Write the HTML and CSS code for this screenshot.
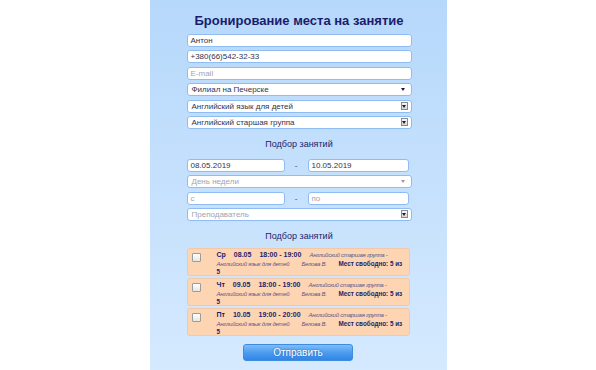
FILE: index.html
```html
<!DOCTYPE html>
<html lang="ru">
<head>
  <meta charset="UTF-8" />
  <meta name="viewport" content="width=device-width, initial-scale=1" />
  <title>Бронирование места на занятие</title>
  <link rel="stylesheet" href="styles.css">
</head>
<body>
  <div class="panel">
    <h1>Бронирование места на занятие</h1>
    <div class="fields">
      <div class="field">Антон</div>
      <div class="field">+380(66)542-32-33</div>
      <div class="field placeholder">E-mail</div>
      <div class="field select">Филиал на Печерске<span class="tri"></span></div>
      <div class="field select">Английский язык для детей<span class="btn-arrow"><span class="tri"></span></span></div>
      <div class="field select">Английский старшая группа<span class="btn-arrow"><span class="tri"></span></span></div>
    </div>

    <h2>Подбор занятий</h2>
    <div class="fields">
      <div class="range">
        <div class="field half">08.05.2019</div>
        <span class="dash">-</span>
        <div class="field half right">10.05.2019</div>
      </div>
      <div class="field select placeholder">День недели<span class="tri light"></span></div>
      <div class="range">
        <div class="field half placeholder">с</div>
        <span class="dash">-</span>
        <div class="field half right placeholder">по</div>
      </div>
      <div class="field select placeholder">Преподаватель<span class="btn-arrow"><span class="tri"></span></span></div>
    </div>

    <h2 class="second">Подбор занятий</h2>
    <div class="lessons">
      <div class="lesson">
        <span class="check"></span>
        <p><b>Ср</b><b class="sp">08.05</b><b class="sp">18:00 - 19:00</b><i class="sp">Английский старшая группа - Английский язык для детей</i><i class="sp wide">Белова В.</i><b class="sp wide free">Мест свободно: 5 из 5</b></p>
      </div>
      <div class="lesson">
        <span class="check"></span>
        <p><b>Чт</b><b class="sp">09.05</b><b class="sp">18:00 - 19:00</b><i class="sp">Английский старшая группа - Английский язык для детей</i><i class="sp wide">Белова В.</i><b class="sp wide free">Мест свободно: 5 из 5</b></p>
      </div>
      <div class="lesson">
        <span class="check"></span>
        <p><b>Пт</b><b class="sp">10.05</b><b class="sp">19:00 - 20:00</b><i class="sp">Английский старшая группа - Английский язык для детей</i><i class="sp wide">Белова В.</i><b class="sp wide free">Мест свободно: 5 из 5</b></p>
      </div>
    </div>

    <div class="actions">
      <button class="submit">Отправить</button>
    </div>
  </div>
</body>
</html>
```

FILE: styles.css
```css
body {
  margin: 0;
  background: #fff;
  font-family: "Liberation Sans", Arial, sans-serif;
}
.panel {
  width: 225px;
  min-height: 370px;
  margin: 0 auto;
  padding: 13px 35px 0 37px;
  box-sizing: content-box;
  background: linear-gradient(180deg, #b6d8fb 0%, #c6e1fd 50%, #d6eaff 100%);
}
h1 {
  margin: 0 -20px 5px;
  font-size: 13px;
  line-height: 16px;
  text-align: center;
  color: #1b1d6b;
}
h2 {
  margin: 9px 0 9px;
  font-size: 9px;
  line-height: 12px;
  font-weight: normal;
  text-align: center;
  color: #1b1d6b;
}
h2.second {
  margin-bottom: 6px;
}
.fields {
  display: flex;
  flex-direction: column;
  gap: 3.4px;
}
.field {
  position: relative;
  height: 13px;
  box-sizing: border-box;
  border: 1px solid #8fbcf2;
  border-radius: 3px;
  background: #fff;
  padding: 0 3px;
  font-size: 8px;
  line-height: 11px;
  color: #33334a;
  box-shadow: 0 0 1px #c7e0fb;
}
.placeholder {
  color: #a4a4b0;
}
.select {
  padding-left: 4px;
}
.tri {
  position: absolute;
  right: 6px;
  top: 4px;
  width: 0;
  height: 0;
  border-left: 2px solid transparent;
  border-right: 2px solid transparent;
  border-top: 3px solid #1a1a3a;
}
.tri.light {
  border-top-color: #9a9aa8;
}
.btn-arrow {
  position: absolute;
  right: 3px;
  top: 1px;
  width: 7px;
  height: 8px;
  box-sizing: border-box;
  border: 1px solid #8a8a8a;
  background: linear-gradient(180deg, #fafafa, #d8d8d8);
}
.btn-arrow .tri {
  right: 1px;
  top: 2px;
}
.range {
  display: flex;
  align-items: center;
}
.half {
  width: 98px;
}
.half.right {
  width: 101px;
  margin-right: 3px;
}
.dash {
  flex: 1;
  text-align: center;
  font-size: 8px;
  color: #3a3a4a;
}
.lessons {
  display: flex;
  flex-direction: column;
  gap: 2px;
  margin-right: 2px;
}
.lesson {
  display: flex;
  height: 28px;
  box-sizing: border-box;
  border: 1px solid #f2c9a8;
  border-radius: 3px;
  background: #fdd5b2;
  padding: 2px 3px 0 4px;
}
.check {
  flex: none;
  width: 7px;
  height: 7px;
  margin-top: 2px;
  border: 1px solid #9c9c9c;
  border-radius: 1px;
  background: linear-gradient(180deg, #fff, #e6e6e6);
}
.lesson p {
  margin: 0 0 0 16px;
  font-size: 7px;
  line-height: 8.5px;
  color: #1b1d6b;
}
.lesson i {
  font-size: 6px;
  letter-spacing: -0.25px;
  color: #55568c;
}
.sp {
  margin-left: 8px;
}
.sp.wide {
  margin-left: 12px;
}
.free {
  font-size: 6.3px;
}
.actions {
  display: flex;
  justify-content: center;
  margin-top: 8px;
  padding-right: 2px;
}
.submit {
  width: 110px;
  height: 17px;
  border: 1px solid #3f8be0;
  border-radius: 3px;
  background: linear-gradient(180deg, #7dbdf7 0%, #4d9df0 50%, #2f86e6 100%);
  color: #fff;
  font-family: "Liberation Sans", Arial, sans-serif;
  font-size: 10px;
  line-height: 15px;
  padding: 0;
  text-shadow: 0 0 2px #1f5fae;
}
```
